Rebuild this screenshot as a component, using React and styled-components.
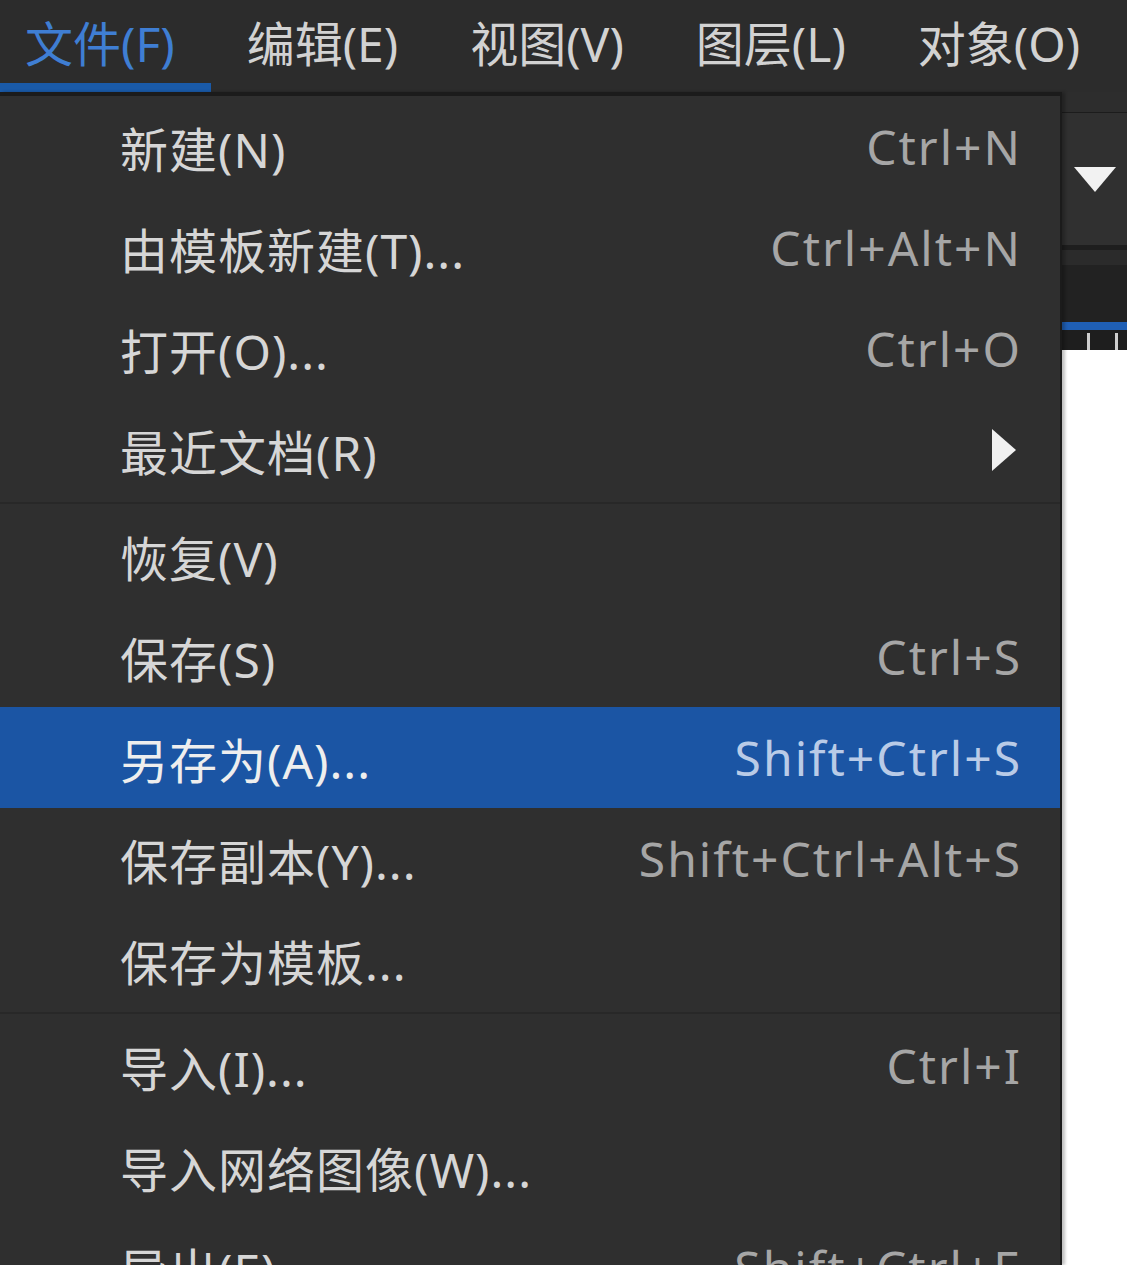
import React from 'react';
import styled, { createGlobalStyle } from 'styled-components';

const GlobalStyle = createGlobalStyle`
  html, body {
    margin: 0;
    padding: 0;
    background: #2b2b2b;
  }
  body {
    font-family: "Noto Sans", "Noto Sans CJK SC", sans-serif;
    overflow: hidden;
  }
`;

const Window = styled.div`
  position: relative;
  width: 1127px;
  height: 1265px;
  overflow: hidden;
  display: flex;
  flex-direction: column;
  background: #2b2b2b;
`;

const MenuBar = styled.div`
  display: flex;
  height: 92px;
  flex-shrink: 0;
  background: #2c2c2c;
`;

const MenuTitle = styled.div`
  display: flex;
  align-items: center;
  padding: ${p => (p.$first ? '0 36px 10px 25px' : '0 36px 10px')};
  font-size: 48px;
  color: ${p => (p.$active ? '#3f7ed3' : '#d2d2d2')};
  box-shadow: ${p => (p.$active ? 'inset 0 -9px 0 #1a5aa8' : 'none')};
  white-space: nowrap;
`;

const TopStrip = styled.div`
  height: 20px;
  background: #2d2d2d;
  border-bottom: 1px solid #1c1c1c;
`;

const ControlBar = styled.div`
  height: 132px;
  display: flex;
  align-items: center;
  justify-content: flex-end;
  padding-right: 9px;
  background: #303030;
  border-bottom: 5px solid #1e1e1e;
`;

const SubStrip = styled.div`
  height: 15px;
  background: #2b2b2b;
`;

const DockStrip = styled.div`
  height: 57px;
  background: #222222;
  border-bottom: 8px solid #1f5fb5;
`;

const Ruler = styled.div`
  height: 20px;
  background-color: #1e1e1e;
  background-image: repeating-linear-gradient(
    to right,
    transparent 0,
    transparent 25px,
    #cfcfcf 25px,
    #cfcfcf 28px
  );
  background-position: 1062px 3px;
  background-size: 100% 17px;
  background-repeat: repeat-x;
`;

const Canvas = styled.div`
  flex: 1;
  background: #ffffff;
`;

const Dropdown = styled.div`
  position: absolute;
  top: 92px;
  left: 0;
  bottom: 0;
  width: 1060px;
  background: #2f2f2f;
  border-top: 4px solid #1b1b1b;
  border-right: 2px solid #1b1b1b;
  box-shadow: 3px 0 3px rgba(0, 0, 0, 0.25);
`;

const Item = styled.div`
  display: flex;
  align-items: center;
  justify-content: space-between;
  height: 101px;
  padding: 0 38px 0 120px;
  font-size: 48px;
  white-space: nowrap;
  background: ${p => (p.$active ? '#1b55a4' : 'transparent')};
`;

const Label = styled.span`
  color: ${p => (p.$active ? '#eeeeee' : '#d6d6d6')};
  letter-spacing: 1px;
`;

const Shortcut = styled.span`
  color: ${p => (p.$active ? '#b9cbe7' : '#a6a6a6')};
  letter-spacing: 2px;
`;

const Separator = styled.div`
  height: 5px;
  display: flex;
  align-items: center;
  &::after {
    content: "";
    flex: 1;
    height: 2px;
    background: #282828;
  }
`;

const Arrow = styled.svg`
  margin-right: 5px;
`;

const items = [
  { label: '新建(N)', sc: 'Ctrl+N' },
  { label: '由模板新建(T)...', sc: 'Ctrl+Alt+N' },
  { label: '打开(O)...', sc: 'Ctrl+O' },
  { label: '最近文档(R)', submenu: true },
  { sep: true },
  { label: '恢复(V)' },
  { label: '保存(S)', sc: 'Ctrl+S' },
  { label: '另存为(A)...', sc: 'Shift+Ctrl+S', active: true },
  { label: '保存副本(Y)...', sc: 'Shift+Ctrl+Alt+S' },
  { label: '保存为模板...' },
  { sep: true },
  { label: '导入(I)...', sc: 'Ctrl+I' },
  { label: '导入网络图像(W)...' },
  { label: '导出(E)...', sc: 'Shift+Ctrl+E' },
];

const titles = ['文件(F)', '编辑(E)', '视图(V)', '图层(L)', '对象(O)'];

export default function App() {
  return (
    <Window>
      <GlobalStyle />
      <MenuBar>
        {titles.map((t, i) => (
          <MenuTitle key={t} $first={i === 0} $active={i === 0}>
            {t}
          </MenuTitle>
        ))}
      </MenuBar>
      <TopStrip />
      <ControlBar>
        <svg width="46" height="27" viewBox="0 0 46 27">
          <polygon points="2,1 44,1 23,26" fill="#f2f2f2" />
        </svg>
      </ControlBar>
      <SubStrip />
      <DockStrip />
      <Ruler />
      <Canvas />

      <Dropdown>
        {items.map((it, i) =>
          it.sep ? (
            <Separator key={i} />
          ) : (
            <Item key={i} $active={it.active}>
              <Label $active={it.active}>{it.label}</Label>
              {it.submenu ? (
                <Arrow width="26" height="44" viewBox="0 0 26 44">
                  <polygon points="1,1 25,22 1,43" fill="#f0f0f0" />
                </Arrow>
              ) : (
                <Shortcut $active={it.active}>{it.sc}</Shortcut>
              )}
            </Item>
          )
        )}
      </Dropdown>
    </Window>
  );
}
